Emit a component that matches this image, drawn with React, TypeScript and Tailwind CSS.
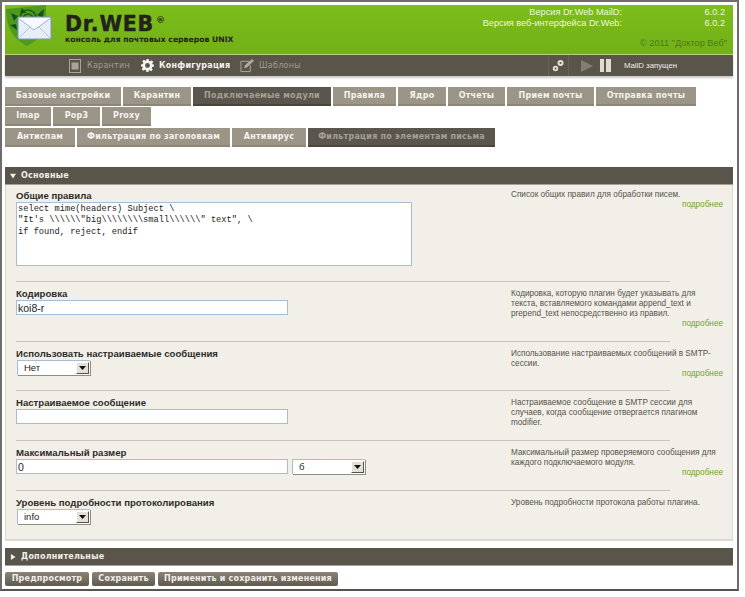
const sans = "font-['Liberation_Sans',Arial,sans-serif]";
const tabFont = "font-['DejaVu_Sans',Verdana,sans-serif]";

function Tab({ label, width, active }: { label: string; width: number; active?: boolean }) {
  return (
    <div
      style={{ width }}
      className={`h-[19px] flex items-center justify-center border-b-2 ${tabFont} font-bold text-[8px] tracking-[0.25px] whitespace-nowrap ${
        active
          ? 'bg-[#5b564d] border-[#4a463e] text-[#a5a095]'
          : 'bg-[#9b9588] border-[#8c8678] text-[#f5f3ed]'
      }`}
    >
      {label}
    </div>
  );
}

function SectionBar({ label, open }: { label: string; open?: boolean }) {
  return (
    <div className={`h-[18px] bg-[#59554b] border-b border-[#a5a196] flex items-center pl-[5px] gap-[5px] ${tabFont} font-bold text-[8px] tracking-[0.25px] text-[#f2efe8]`}>
      <svg width="6" height="6" viewBox="0 0 7 7" fill="#f2efe8">
        {open ? <path d="M0 1h7L3.5 6.5z" /> : <path d="M1 0l5.5 3.5L1 7z" />}
      </svg>
      {label}
    </div>
  );
}

function FakeSelect({ value, width }: { value: string; width: number }) {
  return (
    <div
      style={{ width }}
      className="h-[15px] bg-white border-t border-l border-[#a9bdd2] flex items-center justify-between pr-[1px] shadow-[1px_1px_0_#8d8d84]"
    >
      <span className="pl-[6px] text-[9.5px] text-[#222]">{value}</span>
      <span className="w-[13px] h-[12px] bg-[#e3e0d8] border-r border-b border-[#55534c] border-t-white border-l-white border-t border-l flex items-center justify-center">
        <svg width="7" height="4" viewBox="0 0 7 4" fill="#111"><path d="M0 0h7L3.5 4z" /></svg>
      </span>
    </div>
  );
}

const fieldInput =
  "h-[15px] bg-white border border-[#a9bdd2] text-[10.5px] leading-none text-[#222] px-[1px] outline-none";

function Row({
  label,
  height,
  first,
  desc,
  more,
  children,
}: {
  label: string;
  height: number;
  first?: boolean;
  desc: React.ReactNode;
  more?: boolean;
  children?: React.ReactNode;
}) {
  return (
    <div style={{ height }} className={`flex pl-[10px] ${first ? 'pt-[4px]' : 'pt-[5px]'}`}>
      <div className="w-[495px] shrink-0">
        <div className="h-[13px] leading-[13px] text-[9.6px] font-bold text-[#2d2d2a] whitespace-nowrap">{label}</div>
        {children}
      </div>
      <div className={`w-[212px] shrink-0 text-[8.2px] leading-[10px] text-[#55524a] ${first ? 'pt-[1px]' : 'pt-[2px]'}`}>
        {desc}
        {more && <div className="text-right text-[#6fa51c]">подробнее</div>}
      </div>
    </div>
  );
}

function Rule() {
  return <div className="ml-[10px] w-[654px] h-[1px] bg-[#c9c5ba]" />;
}

function Logo() {
  return (
    <svg width="46" height="42" viewBox="0 0 46 42" className="shrink-0">
      <path d="M0 4 L40 0 L40 18 C38 30 28 38 21 41 C8 34 0 24 0 4Z" fill="#4d9a1f" />
      <g fill="none" stroke="#1d5e16" strokeWidth="1.6">
        <path d="M14 13a8 8 0 0 1 16 0" />
        <path d="M17 14a5 5 0 0 1 10 0" />
        <path d="M20 15a2 2 0 0 1 4 0" />
      </g>
      <path d="M5 8l7 3-4 5zM31 10l7-6-1 9zM4 20l6-1 1 6zM16 3l4 5h-6z" fill="#16531a" />
      <rect x="12" y="12" width="33" height="22" rx="1" fill="#e8eef8" stroke="#7d95b8" />
      <path d="M12 13l16 12 17-12" fill="#f6f9fd" stroke="#9fb2cd" />
      <path d="M13 33l11-11M44 33L33 22" fill="none" stroke="#b4c3da" />
    </svg>
  );
}

export default function App() {
  return (
    <div className={`w-[745px] h-[597px] bg-white ${sans} overflow-hidden`}>
      <div className="w-[739px] h-[591px] border-2 border-[#6d6d6d] border-b-[#55554f] pl-[3px] pr-[3px] pt-[3px]">
        {/* header */}
        <div className="w-[728px] h-[50px] bg-gradient-to-b from-[#7dbd1c] to-[#72b017] border-b border-[#b4d27c] flex pl-[1px]">
          <Logo />
          <div className="ml-[13px] pt-[8px]">
            <div className="h-[22px] leading-[22px] text-[20.5px] font-black font-['DejaVu_Sans',sans-serif] text-[#22211c] tracking-[0.8px] [-webkit-text-stroke:0.4px_#22211c] flex items-start">
              Dr.WEB<span className="text-[9px] leading-[14px] ml-[2px] font-bold tracking-normal [-webkit-text-stroke:0]">®</span>
            </div>
            <div className={`${tabFont} font-bold text-[7.7px] leading-[10px] text-[#22211c] whitespace-nowrap`}>
              консоль для почтовых серверов UNIX
            </div>
          </div>
          <div className="ml-auto pr-[8px] pt-[2px] text-[9.2px] leading-[11px] text-[#eef5dc] w-[340px] whitespace-nowrap">
            <div className="flex justify-end">
              <span>Версия Dr.Web MailD:</span>
              <span className="w-[103px] text-right">6.0.2</span>
            </div>
            <div className="flex justify-end">
              <span>Версия веб-интерфейса Dr.Web:</span>
              <span className="w-[103px] text-right">6.0.2</span>
            </div>
            <div className="text-right text-[#4d7a14] mt-[9px] -mr-[2px]">© 2011 "Доктор Веб"</div>
          </div>
        </div>
        {/* nav */}
        <div className={`w-[728px] h-[21px] bg-[#59554b] shadow-[0_2px_2px_#c9c9c4] flex items-center ${tabFont} text-[8px] tracking-[0.25px] whitespace-nowrap`}>
          <svg width="12" height="14" viewBox="0 0 12 14" className="ml-[64px] shrink-0" fill="none" stroke="#a8a498">
            <rect x="0.5" y="0.5" width="11" height="13" />
            <rect x="3" y="4" width="6" height="6" fill="#a8a498" />
          </svg>
          <span className="ml-[6px] w-[41px] text-[#a19d91]">Карантин</span>
          <svg width="13" height="13" viewBox="0 0 24 24" className="ml-[13px] shrink-0" fill="#f5f3ed">
            <path fillRule="evenodd" d="M10 0h4l.7 3.4 2.2.9 2.9-1.9 2.8 2.8-1.9 2.9.9 2.2L24 10v4l-3.4.7-.9 2.2 1.9 2.9-2.8 2.8-2.9-1.9-2.2.9L14 24h-4l-.7-3.4-2.2-.9-2.9 1.9-2.8-2.8 1.9-2.9-.9-2.2L0 14v-4l3.4-.7.9-2.2-1.9-2.9 2.8-2.8 2.9 1.9 2.2-.9zM12 7.5a4.5 4.5 0 1 0 0 9 4.5 4.5 0 0 0 0-9z" />
          </svg>
          <span className="ml-[5px] w-[70px] font-bold text-[#f5f3ed]">Конфигурация</span>
          <svg width="14" height="15" viewBox="0 0 15 15" className="ml-[11px] shrink-0" fill="none" stroke="#b0aca0">
            <path d="M10 3H1v11h10V7" />
            <path d="M5 10l1-3 7-6 1.5 1.5-7 6.5z" fill="#b0aca0" />
          </svg>
          <span className="ml-[5px] w-[41px] text-[#a19d91]">Шаблоны</span>
          <div className="ml-[248px] w-[21px] h-[21px] shrink-0 border-x border-[#67635a] flex items-center justify-center">
            <svg width="13" height="13" viewBox="0 0 13 13" fill="#e4e1d8">
              <circle cx="8.5" cy="4" r="3" />
              <circle cx="8.5" cy="4" r="1" fill="#59554b" />
              <circle cx="3.5" cy="9.5" r="2.7" />
              <circle cx="3.5" cy="9.5" r="0.9" fill="#59554b" />
            </svg>
          </div>
          <svg width="12" height="14" viewBox="0 0 12 14" className="ml-[12px] shrink-0" fill="#837e72"><path d="M0 1l12 6-12 6z" /></svg>
          <div className="ml-[7px] w-[4px] h-[13px] bg-[#dedbd2]" />
          <div className="ml-[2px] w-[5px] h-[13px] bg-[#dedbd2]" />
          <span className={`ml-[13px] ${sans} text-[7.8px] tracking-normal text-[#efede6]`}>MailD запущен</span>
        </div>
        {/* tabs */}
        <div className="flex gap-[2px] mt-[11px]">
          <Tab label="Базовые настройки" width={116} />
          <Tab label="Карантин" width={68} />
          <Tab label="Подключаемые модули" width={138} active />
          <Tab label="Правила" width={63} />
          <Tab label="Ядро" width={48} />
          <Tab label="Отчеты" width={57} />
          <Tab label="Прием почты" width={87} />
          <Tab label="Отправка почты" width={100} />
        </div>
        <div className="flex gap-[2px] mt-[1px]">
          <Tab label="Imap" width={46} />
          <Tab label="Pop3" width={47} />
          <Tab label="Proxy" width={49} />
        </div>
        <div className="flex gap-[2px] mt-[2px]">
          <Tab label="Антиспам" width={70} />
          <Tab label="Фильтрация по заголовкам" width={153} />
          <Tab label="Антивирус" width={74} />
          <Tab label="Фильтрация по элементам письма" width={187} active />
        </div>
        {/* main section */}
        <div className="w-[728px] mt-[20px]">
          <SectionBar label="Основные" open />
          <div className="h-[356px] bg-[#f2efe8] border-b-2 border-x border-[#dcd9d0]">
            <Row
              label="Общие правила"
              height={96}
              first
              more
              desc="Список общих правил для обработки писем."
            >
              <textarea
                readOnly
                defaultValue={'select mime(headers) Subject \\\n"It\'s \\\\\\\\\\\\"big\\\\\\\\\\\\\\\\small\\\\\\\\\\\\" text", \\\nif found, reject, endif'}
                className="block w-[396px] h-[64px] bg-white border border-[#a9bdd2] font-['Liberation_Mono',monospace] text-[8.7px] leading-[11.3px] text-[#222] px-[1px] pt-[1px] pb-0 resize-none outline-none overflow-hidden"
              />
            </Row>
            <Rule />
            <Row
              label="Кодировка"
              height={59}
              more
              desc="Кодировка, которую плагин будет указывать для текста, вставляемого командами append_text и prepend_text непосредственно из правил."
            >
              <input readOnly defaultValue="koi8-r" className={`${fieldInput} block w-[272px]`} />
            </Row>
            <Rule />
            <Row
              label="Использовать настраиваемые сообщения"
              height={48}
              more
              desc="Использование настраиваемых сообщений в SMTP-сессии."
            >
              <div className="pl-[1px]"><FakeSelect value="Нет" width={73} /></div>
            </Row>
            <Rule />
            <Row
              label="Настраиваемое сообщение"
              height={49}
              desc="Настраиваемое сообщение в SMTP сессии для случаев, когда сообщение отвергается плагином modifier."
            >
              <input readOnly className={`${fieldInput} block w-[272px]`} />
            </Row>
            <Rule />
            <Row
              label="Максимальный размер"
              height={49}
              more
              desc="Максимальный размер проверяемого сообщения для каждого подключаемого модуля."
            >
              <div className="flex gap-[4px]">
                <input readOnly defaultValue="0" className={`${fieldInput} w-[272px]`} />
                <FakeSelect value="б" width={73} />
              </div>
            </Row>
            <Rule />
            <Row
              label="Уровень подробности протоколирования"
              height={48}
              desc="Уровень подробности протокола работы плагина."
            >
              <div className="pl-[1px]"><FakeSelect value="info" width={73} /></div>
            </Row>
          </div>
          <div className="mt-[7px]">
            <SectionBar label="Дополнительные" />
          </div>
          <div className={`flex gap-[3px] mt-[6px] ${tabFont} font-bold text-[8px] tracking-[0.2px] text-[#f2efe8]`}>
            {[
              ['Предпросмотр', 84],
              ['Сохранить', 63],
              ['Применить и сохранить изменения', 180],
            ].map(([label, w]) => (
              <div
                key={label}
                style={{ width: w as number }}
                className="h-[14px] rounded-[2px] bg-gradient-to-b from-[#8a8577] to-[#5f5a50] flex items-center justify-center whitespace-nowrap"
              >
                {label}
              </div>
            ))}
          </div>
        </div>
      </div>
    </div>
  );
}
